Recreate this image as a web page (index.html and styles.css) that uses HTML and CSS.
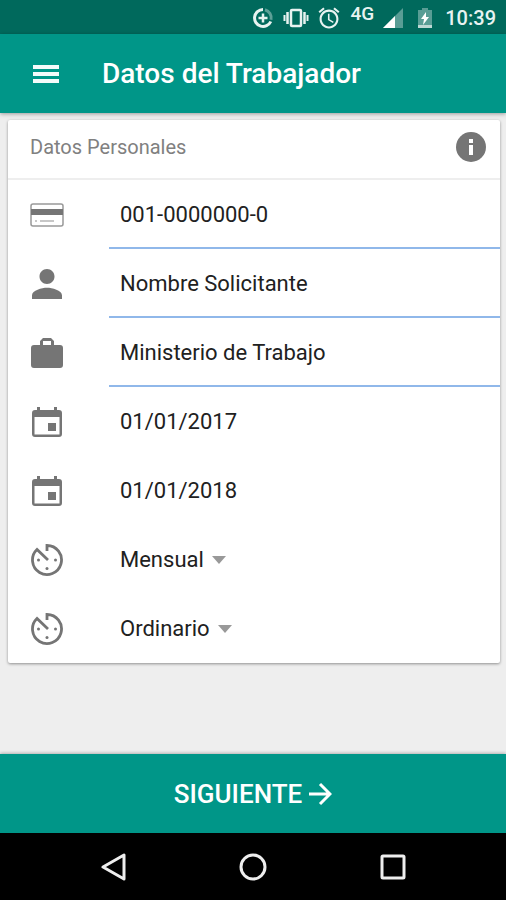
FILE: index.html
```html
<!DOCTYPE html>
<html lang="es">
<head>
  <meta charset="utf-8">
  <meta name="viewport" content="width=device-width, initial-scale=1">
  <title>Datos del Trabajador</title>
  <link rel="stylesheet" href="styles.css">
</head>
<body>
  <svg class="sprite" aria-hidden="true">
    <symbol id="calendar" viewBox="0 0 30 30"><path fill-rule="evenodd" d="M5 0h3v3h14V0h3v3h2q3 0 3 3v21q0 3-3 3H3q-3 0-3-3V6q0-3 3-3h2zM2.500 10v17.500h25V10zM16 16h8v8h-8z"/></symbol>
    <symbol id="timer" viewBox="0 0 32 32"><path d="M16 7V1.500A14.500 14.500 0 1 1 6 5.500L17 16" fill="none" stroke="#757575" stroke-width="2.800"/><circle cx="7.500" cy="16" r="1.500"/><circle cx="24.500" cy="16" r="1.500"/><circle cx="16" cy="24.500" r="1.500"/></symbol>
    <symbol id="caret" viewBox="0 0 14 8"><path d="M0 0h14L7 8z"/></symbol>
  </svg>

  <div class="status">
    <svg width="22" height="22" viewBox="0 0 22 22" fill="none" stroke="#e8f3f1" stroke-width="3"><path d="M11 2.500a8.500 8.500 0 1 0 7.800 12" /><path d="M13 2.700a8.500 8.500 0 0 1 6 10" opacity=".4"/><path d="M11 6.500v9M6.500 11h9" stroke-width="2.500"/></svg>
    <svg width="26" height="22" viewBox="0 0 26 22" fill="none" stroke="#e8f3f1"><rect x="8" y="3" width="10" height="16" rx="1" stroke-width="2.500"/><path d="M4.500 5v12M21.500 5v12" stroke-width="2.500"/><path d="M1.500 8v6M24.500 8v6" stroke-width="2"/></svg>
    <svg width="22" height="22" viewBox="1.500 1.500 21 21" fill="#e8f3f1"><path d="M22 5.720l-4.600-3.860-1.290 1.530 4.600 3.860L22 5.720zM7.880 3.390L6.600 1.860 2 5.710l1.290 1.530 4.590-3.850zM12.500 8H11v6l4.750 2.850.75-1.230-4-2.370V8zM12 4c-4.970 0-9 4.030-9 9s4.020 9 9 9c4.970 0 9-4.030 9-9s-4.030-9-9-9zm0 16c-3.870 0-7-3.130-7-7s3.130-7 7-7 7 3.130 7 7-3.130 7-7 7z"/></svg>
    <span class="network">4G</span>
    <svg class="signal" width="20" height="20" viewBox="0 0 20 20" fill="#fff"><path d="M0 20L20 0v20z" opacity=".35"/><path d="M0 20L12 8v12z"/></svg>
    <svg class="battery" width="14" height="20" viewBox="0 0 14 20" fill="#fff"><path d="M4 0h6v2h4v18H0V2h4z" opacity=".35"/><path d="M0 17h14v3H0z" opacity=".6"/><path d="M8 4L3 11h3l-1 6 6-8H8z"/></svg>
    <time class="clock">10:39</time>
  </div>

  <header class="appbar">
    <button class="menu" type="button" aria-label="Menú">
      <svg width="28" height="20" viewBox="0 0 28 20" fill="#f4fbfa"><path d="M1 1h26v4H1zM1 8h26v4H1zM1 15h26v4H1z"/></svg>
    </button>
    <h1>Datos del Trabajador</h1>
  </header>

  <main>
    <form class="card" id="worker">
      <div class="card-head">
        <h2>Datos Personales</h2>
        <button class="info" type="button" aria-label="Información">
          <svg width="30" height="30" viewBox="0 0 30 30"><circle cx="15" cy="15" r="15" fill="#757575"/><path d="M13 7h4v4h-4zM13 13h4v10h-4z" fill="#fff"/></svg>
        </button>
      </div>
      <div class="row">
        <label for="cedula" aria-label="Cédula">
          <svg width="34" height="24" viewBox="0 0 34 24" fill="none"><rect x="1" y="1" width="32" height="22" rx="2" stroke="#999" stroke-width="1.500"/><path d="M1 6h32v6H1z" fill="#757575"/><path d="M5 18h2M10 18h14" stroke="#b5b5b5" stroke-width="1.500"/></svg>
        </label>
        <div class="field lined"><input id="cedula" type="text" value="001-0000000-0"></div>
      </div>
      <div class="row">
        <label for="nombre" aria-label="Nombre">
          <svg width="30" height="30" viewBox="4 4 16 16"><path d="M12 12c2.210 0 4-1.790 4-4s-1.790-4-4-4-4 1.790-4 4 1.790 4 4 4zm0 2c-2.670 0-8 1.340-8 4v2h16v-2c0-2.660-5.330-4-8-4z"/></svg>
        </label>
        <div class="field lined"><input id="nombre" type="text" value="Nombre Solicitante"></div>
      </div>
      <div class="row">
        <label for="empresa" aria-label="Empresa">
          <svg width="34" height="32" viewBox="0 0 34 32"><path d="M4 8h6V4l3-3h8l3 3v4h6q3 0 3 3v17q0 3-3 3H4q-3 0-3-3V11q0-3 3-3zm9 0h8V4h-8z" fill-rule="evenodd"/></svg>
        </label>
        <div class="field lined"><input id="empresa" type="text" value="Ministerio de Trabajo"></div>
      </div>
      <div class="row">
        <label for="inicio" aria-label="Fecha de inicio"><svg width="30" height="30"><use href="#calendar"/></svg></label>
        <div class="field"><input id="inicio" type="text" value="01/01/2017"></div>
      </div>
      <div class="row">
        <label for="fin" aria-label="Fecha de fin"><svg width="30" height="30"><use href="#calendar"/></svg></label>
        <div class="field"><input id="fin" type="text" value="01/01/2018"></div>
      </div>
      <div class="row">
        <label for="periodo" aria-label="Periodo"><svg width="32" height="32"><use href="#timer"/></svg></label>
        <div class="field"><div class="picker"><select id="periodo"><option>Mensual</option></select><svg class="caret"><use href="#caret"/></svg></div></div>
      </div>
      <div class="row">
        <label for="tipo" aria-label="Tipo"><svg width="32" height="32"><use href="#timer"/></svg></label>
        <div class="field"><div class="picker"><select id="tipo"><option>Ordinario</option></select><svg class="caret"><use href="#caret"/></svg></div></div>
      </div>
    </form>
  </main>

  <button class="next" type="submit" form="worker">
    SIGUIENTE
    <svg width="24" height="24" viewBox="0 0 24 24" fill="none" stroke="#fff" stroke-width="3"><path d="M1 12h20M12 2l10 10-10 10"/></svg>
  </button>

  <nav class="system">
    <button type="button" aria-label="Atrás"><svg width="28" height="28" viewBox="0 0 28 28"><path d="M4 14L25 2v24z"/></svg></button>
    <button type="button" aria-label="Inicio"><svg width="28" height="28" viewBox="0 0 28 28"><circle cx="14" cy="14" r="12"/></svg></button>
    <button type="button" aria-label="Recientes"><svg width="28" height="28" viewBox="0 0 28 28"><rect x="3" y="3" width="22" height="22" rx="1"/></svg></button>
  </nav>
</body>
</html>
```
FILE: styles.css
```css
* { box-sizing: border-box; }

body {
  margin: 0;
  min-height: 100vh;
  display: flex;
  flex-direction: column;
  background: #eee;
  color: #212121;
  font-family: Roboto, sans-serif;
  font-size: 22px;
}

svg { display: block; flex: none; }
.sprite { position: absolute; width: 0; height: 0; }

button {
  border: 0;
  padding: 0;
  background: none;
  color: inherit;
  font: inherit;
}

.status {
  height: 34px;
  padding: 2px 10px 0;
  display: flex;
  align-items: center;
  justify-content: flex-end;
  gap: 9px;
  background: #00695c;
  color: #e8f3f1;
}
.network {
  align-self: flex-start;
  margin-left: 2px;
  font-size: 19px;
  line-height: 24px;
  font-weight: 500;
}
.battery { margin: 0 4px 0 6px; }
.clock { font-size: 20px; font-weight: 500; }

.appbar {
  height: 79px;
  padding: 0 32px;
  display: flex;
  align-items: center;
  gap: 42px;
  background: #009688;
  color: #fff;
  box-shadow: 0 1px 4px rgba(0, 0, 0, .35);
}
h1 { margin: 0; font-size: 28px; font-weight: 500; }

main { flex: 1; padding: 7px 6px 24px 8px; }

.card {
  background: #fff;
  border-radius: 2px;
  box-shadow: 0 1px 3px rgba(0, 0, 0, .4);
}
.card-head {
  height: 60px;
  padding: 0 14px 4px 22px;
  display: flex;
  align-items: center;
  justify-content: space-between;
  border-bottom: 2px solid #eee;
}
h2 { margin: 0; font-size: 20px; font-weight: 400; color: #808080; }

.row { display: flex; height: 69px; }
.row label {
  width: 34px;
  margin: 0 45px 0 22px;
  display: flex;
  align-items: center;
  justify-content: center;
  fill: #757575;
}

.field { flex: 1; min-width: 0; display: flex; align-items: center; }
.lined { border-bottom: 2px solid #90b8ea; padding-top: 2px; }

input, select {
  border: 0;
  margin: 0;
  padding: 0 11px;
  background: none;
  color: inherit;
  font: inherit;
  outline: 0;
}
input { width: 100%; height: 100%; }

.picker { display: grid; align-items: center; }
.picker > * { grid-area: 1 / 1; }
select { appearance: none; padding-right: 22px; }
.caret {
  width: 14px;
  height: 8px;
  justify-self: end;
  fill: #999;
  pointer-events: none;
}

.next {
  height: 79px;
  display: flex;
  align-items: center;
  justify-content: center;
  gap: 6px;
  background: #009688;
  color: #fff;
  font-size: 26px;
  font-weight: 500;
  box-shadow: 0 -1px 3px rgba(0, 0, 0, .25);
}

.system {
  height: 67px;
  padding: 0 43px;
  display: flex;
  align-items: center;
  background: #000;
}
.system button { flex: 1; display: flex; justify-content: center; }
.system svg { fill: none; stroke: #eee; stroke-width: 3; stroke-linejoin: round; }
```
